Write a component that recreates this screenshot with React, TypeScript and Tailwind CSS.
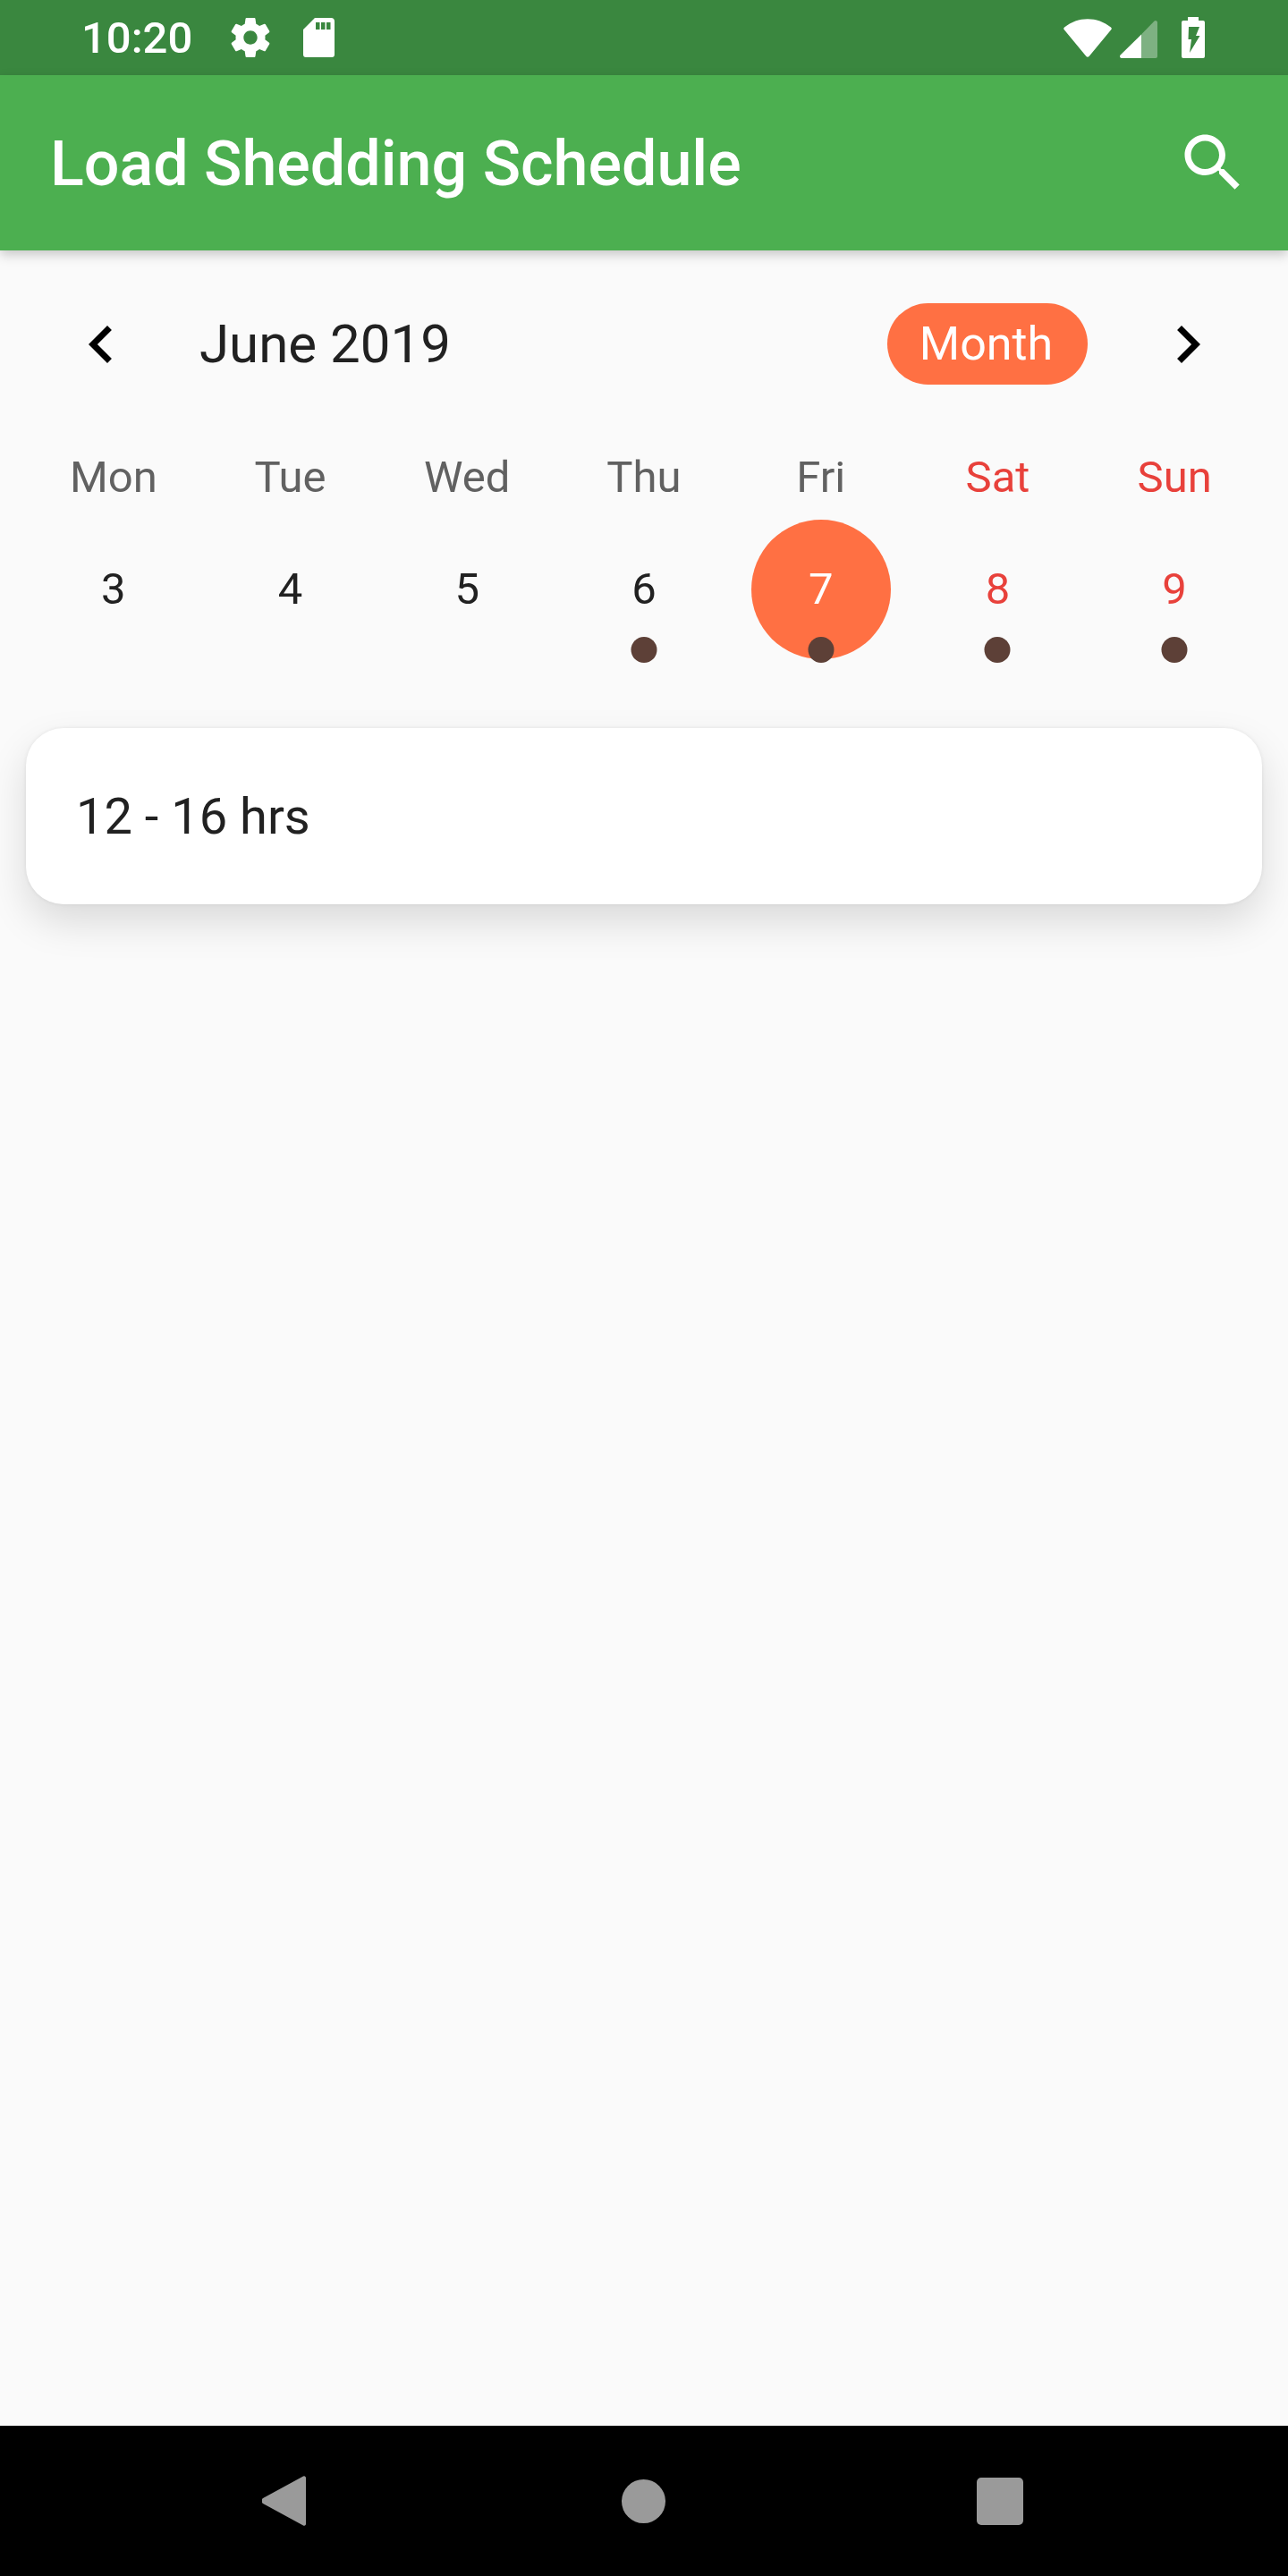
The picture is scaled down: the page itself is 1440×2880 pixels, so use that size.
const weekdays = [
  { label: "Mon", red: false },
  { label: "Tue", red: false },
  { label: "Wed", red: false },
  { label: "Thu", red: false },
  { label: "Fri", red: false },
  { label: "Sat", red: true },
  { label: "Sun", red: true },
];

const days = [
  { day: 3, red: false, dot: false, selected: false },
  { day: 4, red: false, dot: false, selected: false },
  { day: 5, red: false, dot: false, selected: false },
  { day: 6, red: false, dot: true, selected: false },
  { day: 7, red: false, dot: true, selected: true },
  { day: 8, red: true, dot: true, selected: false },
  { day: 9, red: true, dot: true, selected: false },
];

function StatusBar() {
  return (
    <div className="flex h-[84px] shrink-0 items-center bg-[#3A873F] pl-[91px] pr-[93px] text-white">
      <span className="pt-[2px] text-[49px] font-medium leading-[58px]">10:20</span>
      <svg viewBox="2 2 20 20" preserveAspectRatio="none" className="ml-[43px] h-[44px] w-[44px] fill-white">
        <path d="M19.43 12.98c.04-.32.07-.64.07-.98s-.03-.66-.07-.98l2.11-1.65c.19-.15.24-.42.12-.64l-2-3.46c-.12-.22-.39-.3-.61-.22l-2.49 1c-.52-.4-1.08-.73-1.69-.98l-.38-2.65C14.46 2.18 14.25 2 14 2h-4c-.25 0-.46.18-.49.42l-.38 2.65c-.61.25-1.17.59-1.69.98l-2.49-1c-.23-.09-.49 0-.61.22l-2 3.46c-.13.22-.07.49.12.64l2.11 1.65c-.04.32-.07.65-.07.98s.03.66.07.98l-2.11 1.65c-.19.15-.24.42-.12.64l2 3.46c.12.22.39.3.61.22l2.49-1c.52.4 1.08.73 1.69.98l.38 2.65c.03.24.24.42.49.42h4c.25 0 .46-.18.49-.42l.38-2.65c.61-.25 1.17-.59 1.69-.98l2.49 1c.23.09.49 0 .61-.22l2-3.46c.12-.22.07-.49-.12-.64l-2.11-1.65zM12 15.5c-1.93 0-3.5-1.57-3.5-3.5s1.57-3.5 3.5-3.5 3.5 1.57 3.5 3.5-1.57 3.5-3.5 3.5z" />
      </svg>
      <svg viewBox="0 0 35 44" className="ml-[37px] h-[44px] w-[35px] fill-white">
        <path
          fillRule="evenodd"
          d="M13 0H31a4 4 0 0 1 4 4V41a3 3 0 0 1-3 3H3a3 3 0 0 1-3-3V13ZM14 5v8h4.500V5ZM20 5v8h4.500V5ZM26 5v8h4.500V5Z"
        />
      </svg>
      <div className="ml-auto flex items-center">
        <svg viewBox="0 0 54 43" className="h-[43px] w-[54px] fill-white">
          <path d="M1 9.500C16-3 38-3 53 9.500a2 2 0 0 1 .4 2.600L28.600 42a2 2 0 0 1-3.200 0L.6 12.100A2 2 0 0 1 1 9.500Z" />
        </svg>
        <svg viewBox="0 0 42 42" className="ml-[9px] mt-[4px] h-[42px] w-[42px] fill-white">
          <path d="M24 15.500V42H2a2 2 0 0 1-1.400-3.400Z" />
          <path d="M24 15.500L38.600.6A2 2 0 0 1 42 2V40a2 2 0 0 1-2 2H24Z" fillOpacity="0.35" />
        </svg>
        <svg viewBox="0 0 26 46" className="ml-[27px] h-[46px] w-[26px] fill-white">
          <path
            fillRule="evenodd"
            d="M7 0H19V4H24a2 2 0 0 1 2 2V44a2 2 0 0 1-2 2H2a2 2 0 0 1-2-2V6A2 2 0 0 1 2 4H7ZM8 11H20L16 21H20.500L9 40 11 25H7.500Z"
          />
        </svg>
      </div>
    </div>
  );
}

function AppBar() {
  return (
    <div className="relative z-10 flex h-[196px] shrink-0 items-center bg-[#4CAF50] pl-[56px] pr-[42px] shadow-[0_5px_12px_rgba(0,0,0,0.2)]">
      <h1 className="pt-[2px] text-[70px] font-medium leading-[82px] text-white">Load Shedding Schedule</h1>
      <svg viewBox="0 0 24 24" className="ml-auto h-[84px] w-[84px] fill-white">
        <path d="M15.500 14h-.79l-.28-.27C15.410 12.590 16 11.110 16 9.500 16 5.910 13.090 3 9.500 3S3 5.910 3 9.500 5.910 16 9.500 16c1.610 0 3.090-.59 4.230-1.570l.27.28v.79l5 4.990L20.490 19l-4.990-5zm-6 0C7.010 14 5 11.990 5 9.500S7.010 5 9.500 5 14 7.010 14 9.500 11.990 14 9.500 14z" />
      </svg>
    </div>
  );
}

function CalendarHeader() {
  return (
    <div className="mt-[59px] flex h-[91px] items-center pl-[71px] pr-[70px]">
      <svg viewBox="0 0 24 24" className="h-[84px] w-[84px] fill-black">
        <path d="M15.410 7.410L14 6l-6 6 6 6 1.410-1.410L10.830 12z" />
      </svg>
      <span className="ml-[68px] text-[60px] leading-[70px] text-[#212121]">June 2019</span>
      <div className="ml-auto flex h-[91px] w-[224px] items-center justify-center rounded-full bg-[#FF7043] pr-[3px] text-[52px] leading-[61px] text-white">
        Month
      </div>
      <svg viewBox="0 0 24 24" className="ml-[70px] h-[84px] w-[84px] fill-black">
        <path d="M10 6L8.590 7.410 13.170 12l-4.580 4.590L10 18l6-6z" />
      </svg>
    </div>
  );
}

function CalendarWeek() {
  return (
    <div className="px-[28px]">
      <div className="mt-[75px] grid grid-cols-7">
        {weekdays.map((w) => (
          <span
            key={w.label}
            className={`text-center text-[49px] leading-[58px] ${w.red ? "text-[#E8413B]" : "text-[#616161]"}`}
          >
            {w.label}
          </span>
        ))}
      </div>
      <div className="mt-[18px] grid grid-cols-7">
        {days.map((d) => (
          <div key={d.day} className="relative flex h-[156px] items-center justify-center">
            {d.selected && <div className="absolute left-1/2 top-0 h-[156px] w-[156px] -translate-x-1/2 rounded-full bg-[#FF7043]" />}
            <span
              className={`relative text-[49px] leading-[58px] ${
                d.selected ? "text-white" : d.red ? "text-[#E8413B]" : "text-[#212121]"
              }`}
            >
              {d.day}
            </span>
            {d.dot && <div className="absolute left-1/2 top-[131px] h-[29px] w-[29px] -translate-x-1/2 rounded-full bg-[#5D4037]" />}
          </div>
        ))}
      </div>
    </div>
  );
}

function NavBar() {
  return (
    <div className="flex h-[168px] shrink-0 items-center bg-black pl-[293px]">
      <svg viewBox="0 0 49 56" className="h-[56px] w-[49px] fill-[#9A9A9A]">
        <path d="M46 .5a2 2 0 0 1 3 1.500V54a2 2 0 0 1-3 1.500L1 31a4 4 0 0 1 0-6Z" />
      </svg>
      <div className="ml-[353px] h-[49px] w-[49px] rounded-full bg-[#9A9A9A]" />
      <div className="ml-[348px] h-[53px] w-[52px] rounded-[5px] bg-[#9A9A9A]" />
    </div>
  );
}

export default function App() {
  return (
    <div
      className="flex h-[2880px] w-[1440px] flex-col overflow-hidden bg-[#FAFAFA]"
      style={{ fontFamily: "Roboto, sans-serif" }}
    >
      <StatusBar />
      <AppBar />
      <main className="flex-1">
        <CalendarHeader />
        <CalendarWeek />
        <div className="ml-[29px] mt-[77px] flex h-[197px] w-[1382px] items-center rounded-[42px] bg-white pl-[56px] text-[56px] leading-[66px] text-[#212121] shadow-[0_20px_44px_rgba(0,0,0,0.13),0_0_4px_rgba(0,0,0,0.08)]">
          12 - 16 hrs
        </div>
      </main>
      <NavBar />
    </div>
  );
}
